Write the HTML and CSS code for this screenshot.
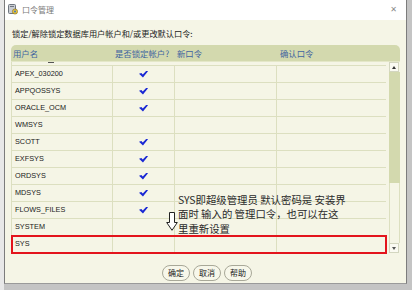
FILE: index.html
```html
<!DOCTYPE html>
<html lang="zh-CN">
<head>
  <meta charset="UTF-8">
  <title>口令管理</title>
  <link rel="stylesheet" href="styles.css">
</head>
<body>
  <div class="desk">
    <div class="dialog">
      <div class="titlebar">
        <svg class="app-icon" width="10" height="11" viewBox="0 0 10 11">
          <rect x="0.5" y="0.5" width="7" height="9" rx="1" fill="#c9ccd2" stroke="#6f7680"/>
          <rect x="2" y="2" width="4" height="1" fill="#6f7680"/>
          <circle cx="7" cy="7.5" r="2.6" fill="#e9c23c" stroke="#7a6a20" stroke-width="0.6"/>
          <circle cx="7" cy="7.5" r="1" fill="#3a78c8"/>
        </svg>
        <span class="title">口令管理</span>
        <span class="close">&#x2715;</span>
      </div>

      <div class="content">
        <p class="hint">锁定/解除锁定数据库用户帐户和/或更改默认口令:</p>

        <div class="grid">
          <div class="head">
            <div class="hcell c1">用户名</div>
            <div class="hcell c2">是否锁定帐户?</div>
            <div class="hcell c3">新口令</div>
            <div class="hcell c4">确认口令</div>
          </div>
          <div class="body">
            <div class="rows">
              <div class="row cut"><span class="stub"></span></div>
              <div class="row"><div class="cell c1">APEX_030200</div><div class="cell c2"><i class="tick"></i></div><div class="cell c3"></div><div class="cell c4"></div></div>
              <div class="row"><div class="cell c1">APPQOSSYS</div><div class="cell c2"><i class="tick"></i></div><div class="cell c3"></div><div class="cell c4"></div></div>
              <div class="row"><div class="cell c1">ORACLE_OCM</div><div class="cell c2"><i class="tick"></i></div><div class="cell c3"></div><div class="cell c4"></div></div>
              <div class="row"><div class="cell c1">WMSYS</div><div class="cell c2"></div><div class="cell c3"></div><div class="cell c4"></div></div>
              <div class="row"><div class="cell c1">SCOTT</div><div class="cell c2"><i class="tick"></i></div><div class="cell c3"></div><div class="cell c4"></div></div>
              <div class="row"><div class="cell c1">EXFSYS</div><div class="cell c2"><i class="tick"></i></div><div class="cell c3"></div><div class="cell c4"></div></div>
              <div class="row"><div class="cell c1">ORDSYS</div><div class="cell c2"><i class="tick"></i></div><div class="cell c3"></div><div class="cell c4"></div></div>
              <div class="row"><div class="cell c1">MDSYS</div><div class="cell c2"><i class="tick"></i></div><div class="cell c3"></div><div class="cell c4"></div></div>
              <div class="row"><div class="cell c1">FLOWS_FILES</div><div class="cell c2"><i class="tick"></i></div><div class="cell c3"></div><div class="cell c4"></div></div>
              <div class="row"><div class="cell c1">SYSTEM</div><div class="cell c2"></div><div class="cell c3"></div><div class="cell c4"></div></div>
              <div class="row marked"><div class="cell c1">SYS</div><div class="cell c2"></div><div class="cell c3"></div><div class="cell c4"></div></div>
            </div>
            <div class="scrollbar">
              <div class="sbtn up"></div>
              <div class="thumb"></div>
              <div class="track"></div>
              <div class="sbtn down"></div>
            </div>
          </div>
        </div>

        <div class="buttons">
          <button class="btn">确定</button>
          <button class="btn">取消</button>
          <button class="btn">帮助</button>
        </div>

        <svg class="arrow" width="12" height="19" viewBox="0 0 12 19">
          <path d="M3.5 0.5 H8.5 V10.5 H11.3 L6 18.3 L0.7 10.5 H3.5 Z" fill="#fff" stroke="#222" stroke-width="1"/>
        </svg>
        <div class="note">SYS即超级管理员 默认密码是 安装界<br>面时 输入的 管理口令，也可以在这<br>里重新设置</div>
      </div>
    </div>
  </div>
</body>
</html>
```

FILE: styles.css
```css
body {
  margin: 0;
  width: 412px;
  height: 290px;
  overflow: hidden;
  background: #c4c4c4;
  font-family: "Noto Sans CJK SC", "Liberation Sans", sans-serif;
}
.desk {
  display: flex;
  height: 290px;
  background: linear-gradient(to right, #e8e8e8 0 4px, #c4c4c4 4px);
}
.dialog {
  width: 401px;
  height: 283px;
  margin-left: 4px;
  border-left: 1px solid #7c7c7c;
  border-right: 1px solid #7c7c7c;
  border-bottom: 1px solid #9a9a9a;
  background: #f5f5e6;
  display: flex;
  flex-direction: column;
}
.titlebar {
  height: 20px;
  background: #fff;
  display: flex;
  align-items: center;
  padding-left: 3px;
}
.app-icon {
  margin-top: -1px;
}
.title {
  margin-left: 4px;
  font-size: 8px;
  line-height: 10px;
  color: #7a7a7a;
}
.close {
  margin-left: auto;
  margin-right: 9px;
  font-size: 8px;
  line-height: 10px;
  color: #8a8a8a;
  font-family: "DejaVu Sans", sans-serif;
}
.content {
  position: relative;
  flex: 1;
  padding: 0 6px;
}
.hint {
  margin: 8px 0 7px 1px;
  font-size: 8.2px;
  line-height: 10px;
  color: #222;
  white-space: nowrap;
}
.grid {
  width: 389px;
}
.head {
  display: flex;
  height: 17px;
  background: #d3d9ae;
  border-radius: 5px 5px 0 0;
  border-bottom: 1px solid #e4e7c8;
  box-sizing: border-box;
}
.hcell {
  font-size: 8.4px;
  line-height: 17px;
  color: #3f64a0;
  padding-left: 2px;
  box-sizing: border-box;
  white-space: nowrap;
}
.c1 { width: 102px; }
.c2 { width: 62px; }
.c3 { width: 102px; }
.c4 { width: 109px; }
.hcell.c3 { padding-left: 2px; }
.hcell.c4 { padding-left: 3px; }
.body {
  display: flex;
}
.rows {
  width: 375px;
  border-left: 1px solid #dcdfc0;
  box-sizing: border-box;
}
.row {
  display: flex;
  height: 17px;
  border-bottom: 1px solid #dcdfc0;
  box-sizing: border-box;
}
.row.cut {
  height: 4px;
  position: relative;
}
.stub {
  position: absolute;
  left: 36px;
  top: 0;
  width: 6px;
  height: 1px;
  background: #555;
}
.cell {
  border-right: 1px solid #dcdfc0;
  box-sizing: border-box;
  font-family: "Liberation Sans", sans-serif;
  font-size: 7.3px;
  line-height: 16px;
  color: #1a1a1a;
  padding-left: 3px;
  display: flex;
  align-items: center;
}
.row .c1 { width: 101px; }
.cell.c2 {
  justify-content: center;
  padding-left: 0;
}
.cell.c4 { border-right: 0; }
.tick {
  display: block;
  width: 9px;
  height: 7px;
  background: #1a28d4;
  clip-path: polygon(0 46%, 26% 34%, 42% 58%, 84% 0, 100% 10%, 44% 100%);
}
.row.marked {
  outline: 2px solid #e3141c;
  outline-offset: -1px;
  position: relative;
}
.scrollbar {
  width: 14px;
  padding-left: 3px;
  box-sizing: border-box;
  display: flex;
  flex-direction: column;
  height: 191px;
}
.sbtn {
  height: 10px;
  background: #fafaf2;
  border: 1px solid #d3d6c0;
  box-sizing: border-box;
  position: relative;
  width: 10px;
}
.sbtn::after {
  content: "";
  position: absolute;
  left: 2px;
  width: 0;
  height: 0;
  border-left: 2.5px solid transparent;
  border-right: 2.5px solid transparent;
}
.sbtn.up::after {
  top: 3px;
  border-bottom: 3px solid #333;
}
.sbtn.down::after {
  top: 3px;
  border-top: 3px solid #555;
}
.thumb {
  height: 111px;
  background: #d3d9ae;
}
.track {
  flex: 1;
  border-left: 1px solid #dcdfc0;
  border-right: 1px solid #dcdfc0;
}
.buttons {
  display: flex;
  gap: 3px;
  margin-top: 12px;
  padding-left: 151px;
}
.btn {
  height: 16px;
  padding: 0 5px;
  border: 1px solid #a8a898;
  border-radius: 8px;
  background: #f7f7ea;
  font-family: "Noto Sans CJK SC", sans-serif;
  font-size: 8px;
  line-height: 14px;
  color: #222;
}
.arrow {
  position: absolute;
  left: 161px;
  top: 192px;
}
.note {
  position: absolute;
  left: 173px;
  top: 173px;
  font-size: 10.4px;
  line-height: 14.3px;
  color: #2a2a2a;
  white-space: nowrap;
}
```
